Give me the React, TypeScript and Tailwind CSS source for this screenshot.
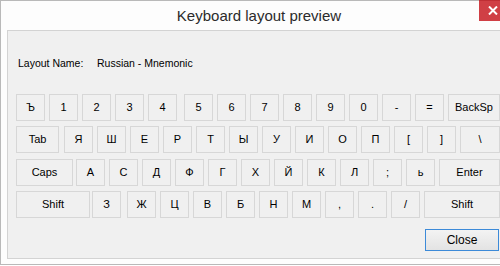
import React from 'react'

type Key = { label: string; cls: string }

const k = (label: string, cls = 'w-[29px] ml-[4px]'): Key => ({ label, cls })

const rows: { top: string; keys: Key[] }[] = [
  {
    top: 'mt-[23px]',
    keys: [
      k('Ъ', 'w-[29px]'),
      k('1'), k('2'), k('3'), k('4'),
      k('5', 'w-[29px] ml-[7px]'),
      k('6'), k('7'), k('8'), k('9'), k('0'), k('-'), k('='),
      k('BackSp', 'w-[52px] ml-[4px]'),
    ],
  },
  {
    top: 'mt-[5px]',
    keys: [
      k('Tab', 'w-[43px]'),
      k('Я', 'w-[29px] ml-[5px]'),
      k('Ш'), k('Е'), k('Р'), k('Т'), k('Ы'), k('У'), k('И'), k('О'), k('П'), k('['), k(']'),
      k('\\', 'w-[40px] ml-[4px]'),
    ],
  },
  {
    top: 'mt-[6px]',
    keys: [
      k('Caps', 'w-[57px]'),
      k('А', 'w-[29px] ml-[3px]'),
      k('С'), k('Д'), k('Ф'), k('Г'), k('Х'), k('Й'), k('К'), k('Л'), k(';'), k('ь'),
      k('Enter', 'w-[61px] ml-[4px]'),
    ],
  },
  {
    top: 'mt-[5px]',
    keys: [
      k('Shift', 'w-[74px]'),
      k('З', 'w-[29px] ml-[2px]'),
      k('Ж', 'w-[29px] ml-[6px]'),
      k('Ц'), k('В'), k('Б'), k('Н'), k('М'), k(','), k('.'), k('/'),
      k('Shift', 'w-[76px] ml-[4px]'),
    ],
  },
]

export default function App() {
  return (
    <div className="w-[500px] h-[266px] bg-white font-['Liberation_Sans',Arial,sans-serif] text-black">
      <div className="w-[500px] h-[265px] border-l border-t border-b border-[#b9b9b9] bg-[#fdfdfd] flex flex-col">
        <div className="h-[29px] shrink-0 flex">
          <div className="w-[478px] shrink-0 pl-[38px] pt-[2px] flex items-center justify-center text-[15px] text-[#2b2b2b]">
            Keyboard layout preview
          </div>
          <div className="w-[21px] h-[21px] -mt-px shrink-0 bg-red-700/75 flex items-center justify-end pr-[2px]">
            <svg width="10" height="9" viewBox="0 0 10 9">
              <path d="M1 0.5 L9 8.5 M9 0.5 L1 8.5" stroke="white" strokeWidth="2" />
            </svg>
          </div>
        </div>
        <div className="ml-[6px] h-[229px] border border-r-0 border-[#d3d3d3] bg-[#f0f0f0] pl-[8px] flex flex-col text-[10.5px]">
          <div className="mt-[24px] h-[16px] leading-[16px] flex pl-[2px]">
            <span className="w-[79px]">Layout Name:</span>
            <span>Russian - Mnemonic</span>
          </div>
          {rows.map((row, i) => (
            <div key={i} className={`flex ${row.top}`}>
              {row.keys.map((key, j) => (
                <div
                  key={j}
                  className={`${key.cls} h-[27px] shrink-0 border border-[#d7d7d7] bg-[#f0f0f0] flex items-center justify-center text-[11px]`}
                >
                  {key.label}
                </div>
              ))}
            </div>
          ))}
          <div className="flex mt-[11px]">
            <button className="ml-[409px] w-[74px] h-[22px] border border-[#3c8ad8] bg-gradient-to-b from-[#f3f3f3] to-[#e3e3e3] text-[12px] leading-none flex items-center justify-center">
              Close
            </button>
          </div>
        </div>
      </div>
    </div>
  )
}
